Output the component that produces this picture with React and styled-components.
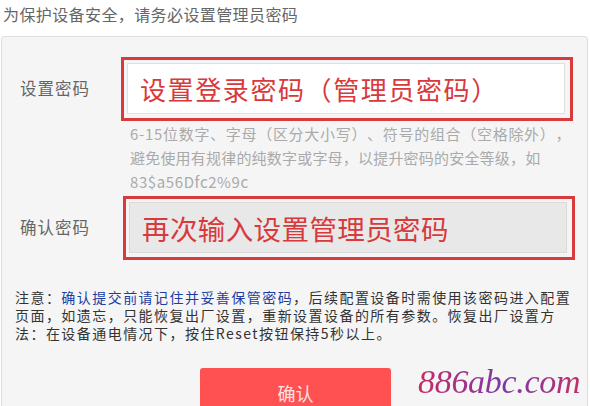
import React from 'react';
import styled, { createGlobalStyle } from 'styled-components';

const GlobalStyle = createGlobalStyle`
  html, body {
    margin: 0;
    padding: 0;
    background: #fff;
    font-family: "Noto Sans CJK SC", "Noto Sans", sans-serif;
    text-spacing-trim: space-all;
  }
`;

const Page = styled.div`
  width: 590px;
  height: 406px;
  overflow: hidden;
  position: relative;
`;

const Intro = styled.div`
  height: 28px;
  line-height: 28px;
  padding-left: 3px;
  font-size: 16px;
  letter-spacing: 0.4px;
  color: #666;
`;

const Panel = styled.div`
  margin: 8px 2px 0 1px;
  height: 400px;
  background: #f5f5f5;
  border: 1px solid #dedede;
  border-radius: 3px;
  padding-top: 20px;
  box-sizing: border-box;
`;

const Row = styled.div`
  display: flex;
  align-items: center;
`;

const Label = styled.div`
  width: 101px;
  padding-left: 18px;
  padding-bottom: 3px;
  font-size: 16.5px;
  letter-spacing: 1px;
  color: #666;
  flex-shrink: 0;
`;

const Mark = styled.div`
  width: 452px;
  height: 64px;
  margin-left: ${(p) => p.$shift || 0}px;
  border: 3px solid #d93a3c;
  box-sizing: border-box;
  padding: 3px 5px 4px 3px;
`;

const Input = styled.div`
  height: 100%;
  box-sizing: border-box;
  border: 1px solid ${(p) => (p.$filled ? '#dadada' : '#e0e0e0')};
  background: ${(p) => (p.$filled ? '#e8e8e8' : '#fff')};
  display: flex;
  align-items: center;
  padding-left: 12px;
  font-size: ${(p) => p.$size}px;
  letter-spacing: ${(p) => p.$spacing || 0}px;
  color: #d8393b;
  white-space: nowrap;
`;

const Hints = styled.div`
  margin-left: 128px;
  font-size: 15px;
  line-height: 24px;
  letter-spacing: 0.2px;
  color: #aaa;
  padding-top: 1px;
  margin-bottom: 2px;
`;

const HintLine = styled.div`
  letter-spacing: ${(p) => p.$spacing || 0.2}px;
`;

const Notice = styled.div`
  margin-top: 28px;
  padding: 0 14px 0 13px;
  font-size: 14px;
  letter-spacing: 1.45px;
  line-height: 18px;
  color: #333;
`;

const Link = styled.span`
  color: #1c3ea3;
`;

const Actions = styled.div`
  margin-top: 26px;
  padding-left: 198px;
`;

const Button = styled.div`
  width: 191px;
  height: 50px;
  background: #ff5151;
  border-radius: 3px;
  color: #fde3e3;
  font-size: 18px;
  text-align: center;
  padding-top: 12px;
  box-sizing: border-box;
`;

const Watermark = styled.div`
  position: absolute;
  left: 418px;
  top: 363px;
  font-family: "Liberation Serif", "DejaVu Serif", serif;
  font-style: italic;
  font-size: 34px;
  letter-spacing: -0.3px;
  background: linear-gradient(90deg, #c82a64 0%, #7a3aa8 55%, #c0306a 100%);
  -webkit-background-clip: text;
  background-clip: text;
  color: transparent;
`;

export default function App() {
  return (
    <Page>
      <GlobalStyle />
      <Intro>为保护设备安全，请务必设置管理员密码</Intro>
      <Panel>
        <Row>
          <Label>设置密码</Label>
          <Mark>
            <Input $size={26} $spacing={1.6}>设置登录密码（管理员密码）</Input>
          </Mark>
        </Row>
        <Hints>
          <HintLine $spacing={0.7}>6-15位数字、字母（区分大小写）、符号的组合（空格除外），</HintLine>
          <HintLine>避免使用有规律的纯数字或字母，以提升密码的安全等级，如</HintLine>
          <HintLine $spacing={0.6}>83$a56Dfc2%9c</HintLine>
        </Hints>
        <Row>
          <Label>确认密码</Label>
          <Mark $shift={2}>
            <Input $filled $size={27.5} $spacing={0.4}>再次输入设置管理员密码</Input>
          </Mark>
        </Row>
        <Notice>
          注意：<Link>确认提交前请记住并妥善保管密码</Link>，后续配置设备时需使用该密码进入配置页面，如遗忘，只能恢复出厂设置，重新设置设备的所有参数。恢复出厂设置方法：在设备通电情况下，按住Reset按钮保持5秒以上。
        </Notice>
        <Actions>
          <Button>确认</Button>
        </Actions>
      </Panel>
      <Watermark>886abc.com</Watermark>
    </Page>
  );
}
